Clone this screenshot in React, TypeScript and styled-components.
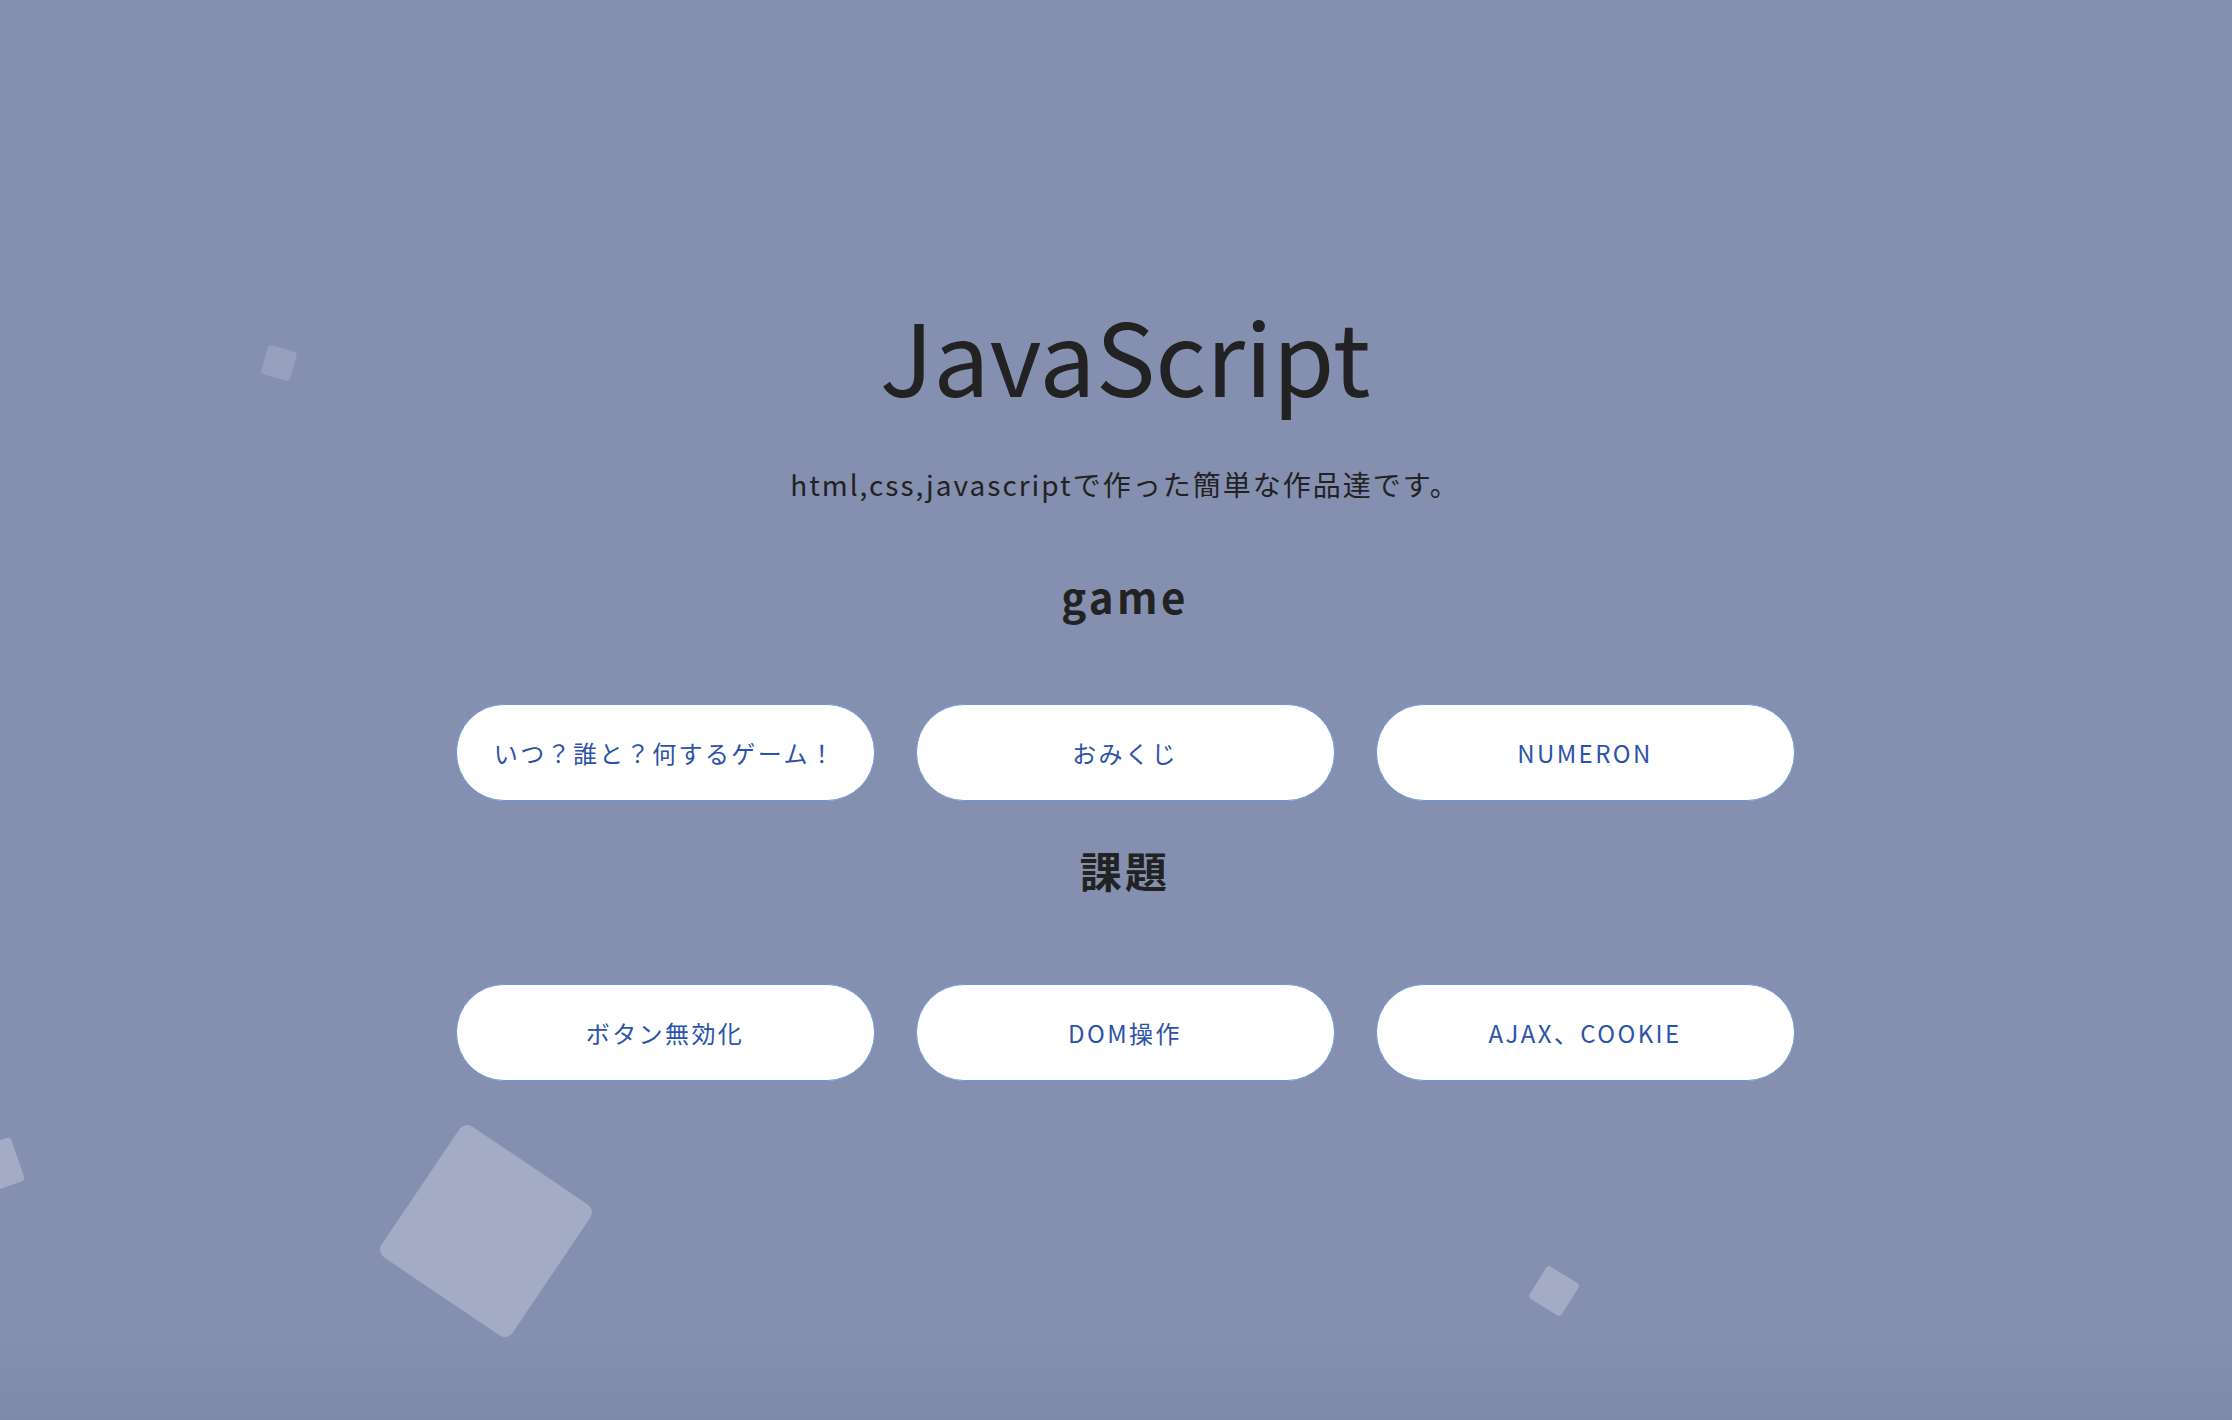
import React from "react";
import styled, { createGlobalStyle } from "styled-components";

const GlobalStyle = createGlobalStyle`
  html, body {
    margin: 0;
    padding: 0;
  }
  body {
    font-family: "Noto Sans CJK JP", "Noto Sans", sans-serif;
    background: #8590b1;
  }
`;

const Page = styled.div`
  position: relative;
  min-height: 1420px;
  overflow: hidden;
  background: linear-gradient(
    to bottom,
    #8590b1 0,
    #8590b1 1340px,
    #7f89a9 1420px
  );
  display: flex;
  flex-direction: column;
  align-items: center;
  padding-left: 18px;
  box-sizing: border-box;
`;

const Title = styled.h1`
  margin: 294px 0 0;
  font-family: "Noto Sans CJK JP", sans-serif;
  font-weight: 400;
  font-size: 100px;
  line-height: 120px;
  letter-spacing: 0;
  color: #222222;
  position: relative;
  z-index: 1;
`;

const Lead = styled.p`
  margin: 50px 0 0;
  font-family: "Noto Sans CJK JP", sans-serif;
  font-size: 28px;
  line-height: 40px;
  letter-spacing: 2px;
  color: #222222;
  position: relative;
  z-index: 1;
`;

const Section = styled.section<{ $top: number; $gap: number }>`
  display: flex;
  flex-direction: column;
  align-items: center;
  gap: ${(p) => p.$gap}px;
  margin-top: ${(p) => p.$top}px;
  position: relative;
  z-index: 1;
`;

const Heading = styled.h2`
  margin: 0;
  font-family: "Noto Sans CJK JP", sans-serif;
  font-weight: 700;
  font-size: 42px;
  line-height: 60px;
  letter-spacing: 0.08em;
  color: #222222;
`;

const ButtonGrid = styled.div`
  display: grid;
  grid-template-columns: repeat(3, 419px);
  column-gap: 41px;
`;

const LinkButton = styled.a`
  display: flex;
  align-items: center;
  justify-content: center;
  height: 97px;
  box-sizing: border-box;
  background: #ffffff;
  border: 1px solid #6f97da;
  border-radius: 48px;
  font-family: "Noto Sans CJK JP", sans-serif;
  font-size: 24px;
  letter-spacing: 0.1em;
  color: #2c53a8;
  text-decoration: none;
  cursor: pointer;
`;

const Square = styled.div<{
  $x: number;
  $y: number;
  $size: number;
  $rot: number;
  $alpha: number;
}>`
  position: absolute;
  left: ${(p) => p.$x - p.$size / 2}px;
  top: ${(p) => p.$y - p.$size / 2}px;
  width: ${(p) => p.$size}px;
  height: ${(p) => p.$size}px;
  background: rgba(255, 255, 255, ${(p) => p.$alpha});
  border-radius: ${(p) => Math.max(4, p.$size * 0.06)}px;
  transform: rotate(${(p) => p.$rot}deg);
  z-index: 0;
`;

const squares = [
  { x: 279, y: 363, size: 30, rot: 16, alpha: 0.14 },
  { x: -4, y: 1166, size: 46, rot: -19, alpha: 0.25 },
  { x: 486, y: 1231, size: 158, rot: 34, alpha: 0.25 },
  { x: 1554, y: 1291, size: 38, rot: 32, alpha: 0.25 },
];

const games = ["いつ？誰と？何するゲーム！", "おみくじ", "NUMERON"];
const tasks = ["ボタン無効化", "DOM操作", "AJAX、COOKIE"];

export default function App() {
  return (
    <>
      <GlobalStyle />
      <Page>
        {squares.map((s, i) => (
          <Square
            key={i}
            $x={s.x}
            $y={s.y}
            $size={s.size}
            $rot={s.rot}
            $alpha={s.alpha}
          />
        ))}
        <Title>JavaScript</Title>
        <Lead>html,css,javascriptで作った簡単な作品達です。</Lead>
        <Section $top={62} $gap={78}>
          <Heading>game</Heading>
          <ButtonGrid>
            {games.map((g) => (
              <LinkButton key={g}>{g}</LinkButton>
            ))}
          </ButtonGrid>
        </Section>
        <Section $top={39} $gap={84}>
          <Heading>課題</Heading>
          <ButtonGrid>
            {tasks.map((t) => (
              <LinkButton key={t}>{t}</LinkButton>
            ))}
          </ButtonGrid>
        </Section>
      </Page>
    </>
  );
}
